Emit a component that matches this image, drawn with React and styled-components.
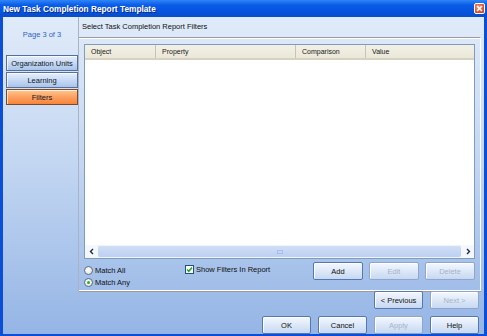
import React, { useState } from "react";
import styled, { createGlobalStyle } from "styled-components";

const Global = createGlobalStyle`
  html, body { margin: 0; padding: 0; background: #ffffff; }
  body { font-family: "Liberation Sans", Arial, sans-serif; }
`;

const Window = styled.div`
  width: 487px;
  height: 336px;
  display: flex;
  flex-direction: column;
  box-sizing: border-box;
  background: #0b4fd8;
  overflow: hidden;
`;

const TitleBar = styled.div`
  height: 17px;
  flex: none;
  display: flex;
  align-items: center;
  justify-content: space-between;
  padding: 0 2px 0 3px;
  background: linear-gradient(#2f86f6 0%, #0a5ce8 30%, #0553de 70%, #0a4cc8 100%);
  color: #ffffff;
  font-weight: bold;
  font-size: 8.3px;
  text-shadow: 1px 1px 0 #0a2a80;
`;

const CloseBox = styled.div`
  width: 11px;
  height: 11px;
  border: 1px solid #ffffff;
  border-radius: 2px;
  box-sizing: border-box;
  background: radial-gradient(circle at 40% 35%, #f59a7a, #e0502c 60%, #c23a1a);
  display: flex;
  align-items: center;
  justify-content: center;
`;

const Client = styled.div`
  flex: 1;
  margin: 0 3px 3px 3px;
  display: flex;
  flex-direction: column;
  background: linear-gradient(#e0ebf9 0%, #c4d7f2 45%, #95b5e5 100%);
`;

const TopRow = styled.div`
  height: 274px;
  display: flex;
`;

const Sidebar = styled.div`
  width: 75px;
  border-right: 1px solid #a8b4c4;
  display: flex;
  flex-direction: column;
  align-items: flex-end;
`;

const PageLabel = styled.div`
  align-self: center;
  margin: 13px 0 0 3px;
  height: 10px;
  line-height: 10px;
  font-size: 7.5px;
  color: #3063c8;
`;

const NavList = styled.div`
  margin-top: 15px;
  display: flex;
  flex-direction: column;
  gap: 1px;
`;

const NavItem = styled.div`
  width: 72px;
  height: 16px;
  box-sizing: border-box;
  display: flex;
  align-items: center;
  justify-content: center;
  font-size: 7.5px;
  color: #101828;
  border: 1px solid ${(p) => (p.$active ? "#7a4a2a" : "#56709a")};
  background: ${(p) =>
    p.$active
      ? "linear-gradient(#ffc890 0%, #fca060 50%, #f8853a 100%)"
      : "linear-gradient(#e6eefa 0%, #c8daf4 50%, #a9c4ea 100%)"};
  box-shadow: inset 1px 1px 0 rgba(255, 255, 255, 0.7);
`;

const Main = styled.div`
  flex: 1;
  display: flex;
  flex-direction: column;
  min-width: 0;
`;

const Caption = styled.div`
  height: 20px;
  padding-left: 3px;
  padding-bottom: 2px;
  box-sizing: border-box;
  display: flex;
  align-items: center;
  font-size: 7.5px;
  color: #101010;
`;

const Group = styled.div`
  flex: 1;
  margin-right: 3px;
  border-top: 1px solid #9a9a9a;
  border-right: 1px solid #ffffff;
  border-bottom: 1px solid #ffffff;
  box-shadow: inset 0 1px 0 #ffffff, 0 1px 0 #9a9a9a;
  padding: 6px 5px 0 5px;
  display: flex;
  flex-direction: column;
`;

const ListBox = styled.div`
  height: 215px;
  border: 1px solid #7f9db9;
  background: #ffffff;
  display: flex;
  flex-direction: column;
  box-sizing: border-box;
`;

const Header = styled.div`
  height: 13px;
  display: flex;
  background: linear-gradient(#f2f0e6, #ebe8d8);
  border-bottom: 2px solid #d6d2c2;
`;

const HeadCell = styled.div`
  width: ${(p) => p.$w}px;
  flex: ${(p) => (p.$grow ? 1 : "none")};
  padding-left: 6px;
  font-size: 7px;
  color: #202020;
  display: flex;
  align-items: center;
  border-right: 1px solid ${(p) => (p.$grow ? "transparent" : "#c8c4b4")};
  box-sizing: border-box;
`;

const Rows = styled.div`
  flex: 1;
`;

const HScroll = styled.div`
  height: 13px;
  display: flex;
  background: #eef3fc;
`;

const ScrollBtn = styled.div`
  width: 13px;
  display: flex;
  align-items: center;
  justify-content: center;
  background: #f4f7fd;
`;

const ScrollTrack = styled.div`
  flex: 1;
  margin: 1px 0;
  border-radius: 2px;
  background: linear-gradient(#d0def6, #bcd0f2);
  display: flex;
  align-items: center;
  justify-content: center;
`;

const Grip = styled.div`
  width: 6px;
  height: 4px;
  border: 1px solid #a8c0e8;
  box-sizing: border-box;
`;

const Controls = styled.div`
  display: flex;
  align-items: flex-start;
  padding-top: 3px;
`;

const RadioCol = styled.div`
  width: 101px;
  display: flex;
  flex-direction: column;
  gap: 2px;
  padding-top: 3px;
`;

const OptionRow = styled.label`
  display: flex;
  align-items: center;
  gap: 2px;
  height: 10px;
  font-size: 7.5px;
  color: #101010;
`;

const RadioDot = styled.span`
  width: 9px;
  height: 9px;
  border-radius: 50%;
  border: 1px solid #5a6e8c;
  box-sizing: border-box;
  background: radial-gradient(circle at 40% 40%, #ffffff, #dcdcd4);
  display: flex;
  align-items: center;
  justify-content: center;
  &::after {
    content: "";
    width: 3px;
    height: 3px;
    border-radius: 50%;
    background: ${(p) => (p.$on ? "#24b224" : "transparent")};
  }
`;

const CheckBox = styled.span`
  width: 9px;
  height: 9px;
  border: 1px solid #1c5180;
  box-sizing: border-box;
  background: #ffffff;
  display: flex;
  align-items: center;
  justify-content: center;
`;

const CheckCol = styled.div`
  flex: 1;
  padding-top: 2px;
`;

const BtnGroup = styled.div`
  display: flex;
  gap: 6px;
`;

const Button = styled.button`
  width: ${(p) => p.$w || 50}px;
  height: 18px;
  padding: 0;
  font-family: "Liberation Sans", Arial, sans-serif;
  font-size: 7.5px;
  color: ${(p) => (p.disabled ? "#a6b4c8" : "#101010")};
  border: 1px solid ${(p) => (p.disabled ? "#8ea6cc" : "#5478b0")};
  border-radius: 2px;
  background: linear-gradient(#f4f8fe 0%, #dde8f8 50%, #c6d8f2 100%);
  box-shadow: inset 1px 1px 0 #ffffff;
`;

const NavRow = styled.div`
  display: flex;
  justify-content: flex-end;
  gap: 7px;
  padding: 0 5px 0 0;
`;

const ActionRow = styled.div`
  display: flex;
  justify-content: flex-end;
  gap: 7px;
  margin-top: 7px;
  padding: 0 5px 0 0;
`;

const Arrow = ({ dir }) => (
  <svg width="6" height="7" viewBox="0 0 6 7">
    <path
      d={dir === "left" ? "M4 1 L1.5 3.5 L4 6" : "M2 1 L4.5 3.5 L2 6"}
      fill="none"
      stroke="#1a2a4a"
      strokeWidth="1.4"
    />
  </svg>
);

export default function App() {
  const [match, setMatch] = useState("any");
  const [showFilters, setShowFilters] = useState(true);
  const nav = ["Organization Units", "Learning", "Filters"];

  return (
    <>
      <Global />
      <Window>
        <TitleBar>
          <span>New Task Completion Report Template</span>
          <CloseBox>
            <svg width="7" height="7" viewBox="0 0 7 7">
              <path d="M1 1 L6 6 M6 1 L1 6" stroke="#ffffff" strokeWidth="1.6" />
            </svg>
          </CloseBox>
        </TitleBar>
        <Client>
          <TopRow>
            <Sidebar>
              <PageLabel>Page 3 of 3</PageLabel>
              <NavList>
                {nav.map((n) => (
                  <NavItem key={n} $active={n === "Filters"}>
                    {n}
                  </NavItem>
                ))}
              </NavList>
            </Sidebar>
            <Main>
              <Caption>Select Task Completion Report Filters</Caption>
              <Group>
                <ListBox>
                  <Header>
                    <HeadCell $w={71}>Object</HeadCell>
                    <HeadCell $w={140}>Property</HeadCell>
                    <HeadCell $w={70}>Comparison</HeadCell>
                    <HeadCell $grow>Value</HeadCell>
                  </Header>
                  <Rows />
                  <HScroll>
                    <ScrollBtn>
                      <Arrow dir="left" />
                    </ScrollBtn>
                    <ScrollTrack>
                      <Grip />
                    </ScrollTrack>
                    <ScrollBtn>
                      <Arrow dir="right" />
                    </ScrollBtn>
                  </HScroll>
                </ListBox>
                <Controls>
                  <RadioCol>
                    <OptionRow onClick={() => setMatch("all")}>
                      <RadioDot $on={match === "all"} />
                      Match All
                    </OptionRow>
                    <OptionRow onClick={() => setMatch("any")}>
                      <RadioDot $on={match === "any"} />
                      Match Any
                    </OptionRow>
                  </RadioCol>
                  <CheckCol>
                    <OptionRow onClick={() => setShowFilters(!showFilters)}>
                      <CheckBox>
                        {showFilters && (
                          <svg width="7" height="7" viewBox="0 0 7 7">
                            <path d="M1 3.5 L2.8 5.3 L6 1.5" fill="none" stroke="#21a121" strokeWidth="1.5" />
                          </svg>
                        )}
                      </CheckBox>
                      Show Filters In Report
                    </OptionRow>
                  </CheckCol>
                  <BtnGroup>
                    <Button>Add</Button>
                    <Button disabled>Edit</Button>
                    <Button disabled>Delete</Button>
                  </BtnGroup>
                </Controls>
              </Group>
            </Main>
          </TopRow>
          <NavRow>
            <Button $w={49}>&lt; Previous</Button>
            <Button $w={49} disabled>
              Next &gt;
            </Button>
          </NavRow>
          <ActionRow>
            <Button $w={49}>OK</Button>
            <Button $w={49}>Cancel</Button>
            <Button $w={49} disabled>
              Apply
            </Button>
            <Button $w={49}>Help</Button>
          </ActionRow>
        </Client>
      </Window>
    </>
  );
}
